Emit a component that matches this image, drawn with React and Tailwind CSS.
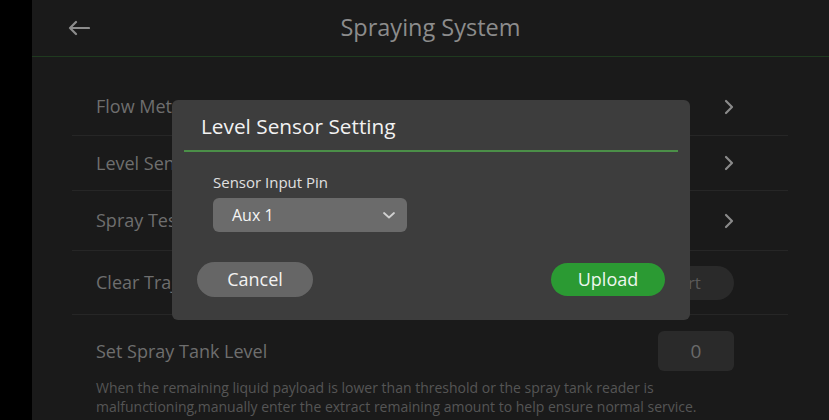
import React from 'react';

const Chevron = () => (
  <svg width="14" height="16" viewBox="0 0 14 16" fill="none" stroke="#8a8a8a" strokeWidth="2.2" strokeLinecap="round" strokeLinejoin="round">
    <path d="M4 2l6 6-6 6" />
  </svg>
);

const Row = ({ label, height, children, last, className = '' }) => (
  <div className={`flex items-center justify-between pl-[24px] ${last ? '' : 'border-b border-[#262626]'} ${className}`} style={{ height }}>
    <span className="text-[18px] text-[#6e6e6e]">{label}</span>
    {children}
  </div>
);

const LevelSensorDialog = () => (
  <div className="absolute left-[172px] top-[100px] w-[518px] h-[220px] bg-[#3d3d3d] rounded-[6px] flex flex-col">
    <div className="h-[50px] flex items-end pl-[29px] pb-[13px]">
      <span className="text-[20.8px] text-[#f2f2f2] leading-none">Level Sensor Setting</span>
    </div>
    <div className="mx-[12px] h-[2px] bg-[#4b8f48]" />
    <div className="pl-[41px] pt-[23px]">
      <div className="text-[15px] text-[#e0e0e0] leading-none">Sensor Input Pin</div>
      <div className="mt-[8px] w-[194px] h-[34px] bg-[#6b6b6b] rounded-[6px] flex items-center justify-between pl-[19px] pr-[11px]">
        <span className="text-[16px] text-[#f5f5f5]">Aux 1</span>
        <svg width="14" height="10" viewBox="0 0 14 10" fill="none" stroke="#d0d0d0" strokeWidth="1.8" strokeLinecap="round" strokeLinejoin="round">
          <path d="M2 3l5 4.5L12 3" />
        </svg>
      </div>
    </div>
    <div className="flex justify-between items-center pl-[25px] pr-[25px] mt-[30px]">
      <button className="w-[116px] h-[35px] rounded-full bg-[#666666] text-[18px] text-[#f2f2f2]">Cancel</button>
      <button className="w-[114px] h-[33px] rounded-full bg-[#2b9a33] text-[18px] text-[#eef7ee]">Upload</button>
    </div>
  </div>
);

export default function App() {
  return (
    <div className="relative w-[829px] h-[420px] flex bg-black overflow-hidden" style={{ fontFamily: '"Open Sans", "Noto Sans", sans-serif' }}>
      <div className="w-[32px] shrink-0 bg-black" />
      <div className="flex-1 bg-[#1a1a1a] flex flex-col">
        <div className="h-[57px] shrink-0 border-b border-[#1f3a1f] flex items-center relative">
          <div className="pl-[36px]">
            <svg width="22" height="16" viewBox="0 0 22 16" fill="none" stroke="#8c8c8c" strokeWidth="2.2" strokeLinecap="round" strokeLinejoin="round">
              <path d="M21 8H2M8 2L2 8l6 6" />
            </svg>
          </div>
          <div className="absolute inset-0 flex items-center justify-center">
            <span className="text-[23.5px] text-[#8c8c8c]">Spraying System</span>
          </div>
        </div>
        <div className="ml-[40px] w-[716px] pt-[21px] flex flex-col">
          <Row label="Flow Meter" height={58}>
            <div className="pr-[52px]"><Chevron /></div>
          </Row>
          <Row label="Level Sensor" height={55}>
            <div className="pr-[52px]"><Chevron /></div>
          </Row>
          <Row label="Spray Test" height={60}>
            <div className="pr-[52px]"><Chevron /></div>
          </Row>
          <Row label="Clear Trajectory" height={64}>
            <div className="pr-[54px]">
              <div className="w-[104px] h-[34px] rounded-full bg-[#2a2a2a] flex items-center justify-center text-[17px] text-[#5a5a5a]">Start</div>
            </div>
          </Row>
          <Row label="Set Spray Tank Level" height={63} last className="pt-[9px]">
            <div className="pr-[54px]">
              <div className="w-[76px] h-[40px] rounded-[6px] bg-[#2a2a2a] flex items-center justify-center text-[19px] text-[#6a6a6a]">0</div>
            </div>
          </Row>
          <p className="pl-[24px] pr-[20px] text-[14px] leading-[19px] text-[#555555]">
            When the remaining liquid payload is lower than threshold or the spray tank reader is malfunctioning,manually enter the extract remaining amount to help ensure normal service.
          </p>
        </div>
      </div>
      <LevelSensorDialog />
    </div>
  );
}
